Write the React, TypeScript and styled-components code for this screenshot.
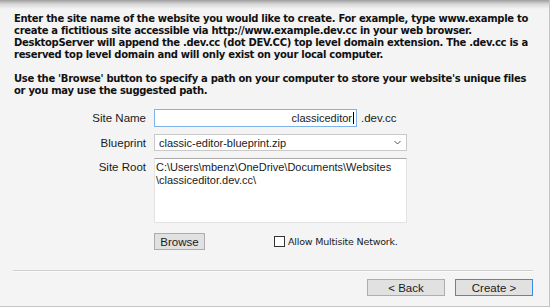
import React from 'react';
import styled, { createGlobalStyle } from 'styled-components';

const GlobalStyle = createGlobalStyle`
  html, body {
    margin: 0;
    padding: 0;
    background: #f4f4f4;
  }
`;

const StyledPage = styled.div`
  width: 550px;
  height: 307px;
  box-sizing: border-box;
  background: linear-gradient(to bottom, #9e9e9e 0px, #d6d6d6 4px, #f4f4f4 9px);
  border-right: 1px solid #c4c4c4;
  border-bottom: 1px solid #c4c4c4;
  display: flex;
  flex-direction: column;
  overflow: hidden;
`;

const StyledIntro = styled.div`
  padding: 13px 0 0 14px;
  font-family: 'DejaVu Sans', Verdana, sans-serif;
  font-weight: bold;
  font-size: 10px;
  letter-spacing: -0.3px;
  line-height: 12px;
  color: #111;
  white-space: nowrap;

  p {
    margin: 0 0 12px 0;
  }

  p:last-child {
    margin-bottom: 0;
  }
`;

const StyledForm = styled.div`
  display: grid;
  grid-template-columns: 133px 253px;
  column-gap: 8px;
  row-gap: 7px;
  margin-top: 12px;
  padding-left: 13px;
  font-family: 'Liberation Sans', Arial, sans-serif;
  font-size: 11px;
  color: #1a1a1a;
`;

const StyledLabel = styled.div<{ $top?: boolean }>`
  text-align: right;
  align-self: ${(p) => (p.$top ? 'start' : 'center')};
  padding-top: ${(p) => (p.$top ? '3px' : '0')};
  font-size: 11.5px;
`;

const StyledNameRow = styled.div`
  display: flex;
  align-items: center;
  gap: 4px;
  font-size: 11.5px;
`;

const StyledInput = styled.div`
  width: 203px;
  height: 18px;
  box-sizing: border-box;
  background: #fff;
  border: 1px solid #7eb4ea;
  display: flex;
  align-items: center;
  justify-content: flex-end;
  padding-right: 2px;
  font-size: 11px;
`;

const StyledCaret = styled.span`
  display: inline-block;
  width: 1px;
  height: 12px;
  background: #000;
  margin-left: 1px;
`;

const StyledSelect = styled.div`
  width: 253px;
  height: 17px;
  box-sizing: border-box;
  background: #fff;
  border: 1px solid #c9c9c9;
  display: flex;
  align-items: center;
  justify-content: space-between;
  padding: 0 5px 0 4px;
  font-size: 11px;
`;

const StyledTextArea = styled.div`
  width: 253px;
  height: 65px;
  box-sizing: border-box;
  background: #fff;
  border: 1px solid #e3e3e3;
  border-top-color: #a9a9a9;
  padding: 2px 1px;
  font-size: 11px;
  line-height: 13px;
`;

const StyledActions = styled.div`
  display: flex;
  align-items: center;
  margin-top: 3px;
`;

const StyledButton = styled.div<{ $primary?: boolean; $w: number }>`
  width: ${(p) => p.$w}px;
  height: 17px;
  box-sizing: border-box;
  background: #e1e1e1;
  border: 1px solid ${(p) => (p.$primary ? '#3c8ce3' : '#adadad')};
  display: flex;
  align-items: center;
  justify-content: center;
  font-family: 'Liberation Sans', Arial, sans-serif;
  font-size: 11.5px;
  color: #1a1a1a;
`;

const StyledCheck = styled.label`
  display: flex;
  align-items: center;
  gap: 3px;
  margin-left: 69px;
  font-family: 'DejaVu Sans', Verdana, sans-serif;
  font-size: 9.5px;
  letter-spacing: -0.2px;
  white-space: nowrap;

  span.box {
    width: 9px;
    height: 9px;
    background: #fff;
    border: 1px solid #333;
  }
`;

const StyledSeparator = styled.div`
  margin: 20px 16px 0 13px;
  height: 1px;
  background: #cfcfcf;
  border-bottom: 1px solid #fbfbfb;
`;

const StyledFooter = styled.div`
  display: flex;
  justify-content: flex-end;
  gap: 10px;
  padding: 7px 16px 0 0;
`;

const App = () => {
  return (
    <>
      <GlobalStyle />
      <StyledPage>
        <StyledIntro>
          <p>
            Enter the site name of the website you would like to create. For example, type www.example to
            <br />
            create a fictitious site accessible via http://www.example.dev.cc in your web browser.
            <br />
            DesktopServer will append the .dev.cc (dot DEV.CC) top level domain extension. The .dev.cc is a
            <br />
            reserved top level domain and will only exist on your local computer.
          </p>
          <p>
            Use the 'Browse' button to specify a path on your computer to store your website's unique files
            <br />
            or you may use the suggested path.
          </p>
        </StyledIntro>
        <StyledForm>
          <StyledLabel>Site Name</StyledLabel>
          <StyledNameRow>
            <StyledInput>
              classiceditor
              <StyledCaret />
            </StyledInput>
            .dev.cc
          </StyledNameRow>
          <StyledLabel>Blueprint</StyledLabel>
          <StyledSelect>
            classic-editor-blueprint.zip
            <svg width="7" height="5" viewBox="0 0 7 5">
              <path d="M0.5 1 L3.5 4 L6.5 1" fill="none" stroke="#555" strokeWidth="1" />
            </svg>
          </StyledSelect>
          <StyledLabel $top>Site Root</StyledLabel>
          <StyledTextArea>
            C:\Users\mbenz\OneDrive\Documents\Websites
            <br />
            \classiceditor.dev.cc\
          </StyledTextArea>
          <div />
          <StyledActions>
            <StyledButton $w={51}>Browse</StyledButton>
            <StyledCheck>
              <span className="box" />
              Allow Multisite Network.
            </StyledCheck>
          </StyledActions>
        </StyledForm>
        <StyledSeparator />
        <StyledFooter>
          <StyledButton $w={78}>&lt; Back</StyledButton>
          <StyledButton $w={78} $primary>
            Create &gt;
          </StyledButton>
        </StyledFooter>
      </StyledPage>
    </>
  );
};

export default App;
